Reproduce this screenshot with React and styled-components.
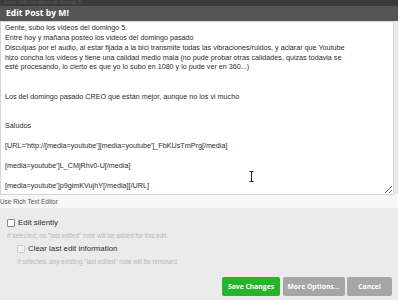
import styled, { createGlobalStyle } from "styled-components";

const GlobalStyle = createGlobalStyle`
  html, body {
    margin: 0;
    padding: 0;
    background: #3b3b3b;
    overflow: hidden;
  }
`;

const POST = `Gente, subo los videos del domingo 5.
Entre hoy y mañana posteo los videos del domingo pasado
Disculpas por el audio, al estar fijada a la bici transmite todas las vibraciones/ruidos, y aclarar que Youtube
hizo concha los videos y tiene una calidad medio mala (no pude probar otras calidades, quizas todavia se
esté procesando, lo cierto es que yo lo subo en 1080 y lo pude ver en 360...)


Los del domingo pasado CREO que están mejor, aunque no los vi mucho


Saludos

[URL='http://[media=youtube'][media=youtube']_FbKUsTmPrg[/media]

[media=youtube']L_CMjRhv0-U[/media]

[media=youtube']p9gimKVujhY[/media][/URL]`;

export default function App() {
  return (
    <>
      <GlobalStyle />
      <Page>
        <Backdrop>Gente, subo los videos del domingo 5.</Backdrop>
        <Dialog>
          <TitleBar>Edit Post by M!</TitleBar>
          <EditorWrap>
            <Editor readOnly wrap="off" defaultValue={POST} />
            <Cursor width="5" height="11" viewBox="0 0 5 11">
              <path d="M0.5 0.5h4M2.5 0.5v10M0.5 10.5h4" stroke="#222" strokeWidth="1" fill="none" />
            </Cursor>
          </EditorWrap>
          <RichToggle>Use Rich Text Editor</RichToggle>
          <Options>
            <Option>
              <Check type="checkbox" />
              <Label>Edit silently</Label>
            </Option>
            <Hint>If selected, no "last edited" note will be added for this edit.</Hint>
            <Option $nested>
              <Check type="checkbox" disabled />
              <Label>Clear last edit information</Label>
            </Option>
            <Hint $nested>If selected, any existing "last edited" note will be removed.</Hint>
          </Options>
          <Buttons>
            <Button $primary $w={58}>Save Changes</Button>
            <Button $w={62}>More Options...</Button>
            <Button $w={45}>Cancel</Button>
          </Buttons>
        </Dialog>
      </Page>
    </>
  );
}

const Page = styled.div`
  width: 398px;
  height: 300px;
  display: flex;
  flex-direction: column;
  font-family: "Liberation Sans", Arial, sans-serif;
`;

const Backdrop = styled.div`
  height: 6px;
  padding-left: 4px;
  font-size: 4.6px;
  line-height: 5px;
  color: #5c5c5c;
  white-space: nowrap;
`;

const Dialog = styled.div`
  flex: 1;
  display: flex;
  flex-direction: column;
  background: #ebebeb;
  border-left: 2px solid #3b3b3b;
  margin-left: -2px;
`;

const TitleBar = styled.div`
  height: 15px;
  background: #555555;
  color: #fff;
  font-family: "Open Sans", sans-serif;
  font-weight: 700;
  font-size: 8.6px;
  line-height: 15px;
  padding-left: 8px;
  margin-left: -2px;
`;

const EditorWrap = styled.div`
  position: relative;
  display: flex;
`;

const Editor = styled.textarea`
  width: 394px;
  height: 174px;
  box-sizing: border-box;
  margin: 0;
  border: 1px solid #d6d6d6;
  background: #fff;
  color: #2a2a2a;
  font-family: "Liberation Sans", Arial, sans-serif;
  font-size: 7.2px;
  line-height: 9.85px;
  padding: 1px 4px;
  resize: vertical;
  overflow: hidden;
  outline: none;
  white-space: pre;
`;

const Cursor = styled.svg`
  position: absolute;
  left: 249px;
  top: 150px;
`;

const RichToggle = styled.div`
  height: 13px;
  background: #f8f8f8;
  font-size: 6.4px;
  line-height: 13px;
  color: #555;
`;

const Options = styled.div`
  display: flex;
  flex-direction: column;
  padding: 9px 0 0 7px;
`;

const Option = styled.label`
  display: flex;
  align-items: center;
  gap: 3px;
  height: 11px;
  margin-left: ${(p) => (p.$nested ? "10px" : "0")};
  margin-top: ${(p) => (p.$nested ? "4px" : "0")};
`;

const Check = styled.input`
  appearance: none;
  width: 8px;
  height: 8px;
  margin: 0;
  box-sizing: border-box;
  background: #fff;
  border: 1px solid #8a8a8a;
  border-radius: 1px;

  &:disabled {
    background: #f0f0f0;
    border-color: #cfcfcf;
  }
`;

const Label = styled.span`
  font-size: 7.9px;
  color: #2e2e2e;
`;

const Hint = styled.div`
  font-size: 6.3px;
  color: #b8b8b8;
  margin-top: 4px;
  margin-left: ${(p) => (p.$nested ? "10px" : "0")};
`;

const Buttons = styled.div`
  margin-top: auto;
  display: flex;
  justify-content: flex-end;
  gap: 2.5px;
  padding: 0 6px 4px 0;
`;

const Button = styled.button`
  width: ${(p) => p.$w}px;
  height: 19px;
  border: none;
  border-radius: 2px;
  padding: 0;
  background: ${(p) => (p.$primary ? "#25b42b" : "#a6a6a6")};
  color: #fff;
  font-family: "Open Sans", sans-serif;
  font-weight: 700;
  font-size: 6.8px;
  cursor: pointer;
`;
